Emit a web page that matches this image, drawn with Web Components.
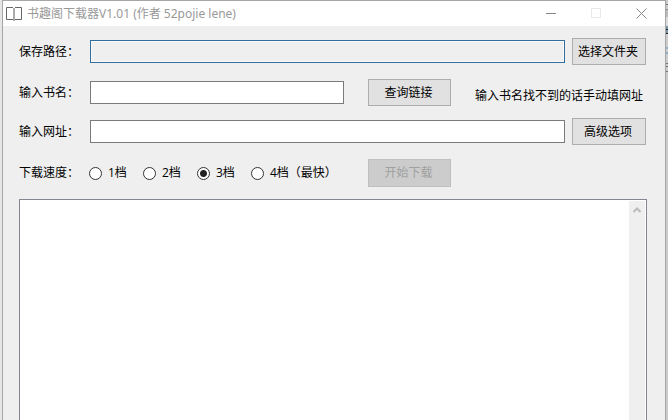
<!DOCTYPE html>
<html lang="zh-CN">
<head>
<meta charset="utf-8">
<title>书趣阁下载器V1.01</title>
<style>
  html, body { height: 100%; margin: 0; }
  body {
    overflow: hidden;
    font: 12px/16px "Open Sans", "Noto Sans CJK SC", sans-serif;
    color: #000;
    /* desktop showing past the window's edges */
    background:
      linear-gradient(#ccc 4px, #777 4px 5px, #ccc 5px 9px, #998f80 9px 10px, #bbb 10px 17px, #ddd 17px 26px, #7894a8 26px 29px, #222 29px 30px, #7894a8 30px 33px, #222 33px 34px, #ccc 34px 47px, #8fb0c8 47px 49px, #ccc 49px 52px, #8fb0c8 52px 54px, #ccc 54px 63px, #777 63px 64px, #ccc 64px 66px, #777 66px 67px, #ccc 67px 71px, #777 71px 72px, #cbcbcb 72px) right / 2px 100% no-repeat,
      #e6e6e6;
  }
</style>
</head>
<body>

<app-window caption="书趣阁下载器V1.01 (作者 52pojie lene)">
  <download-form></download-form>
</app-window>

<script>
(function(customElements){
  'use strict';

  class AppWindow extends HTMLElement{
    constructor(){
      super();
      this.attachShadow({mode: 'open'}).innerHTML = `<style>
        :host{
          display: flex;
          flex-direction: column;
          box-sizing: border-box;
          height: 100%;
          margin: 0 2px;
          border: 1px solid #a6a6a6;
          border-bottom: 0;
          background: #efefef;
        }
        header{
          display: flex;
          align-items: center;
          height: 25px;
          flex: none;
          padding: 0 1px 0 3px;
          background: #fff;
          color: #999;
        }
        .logo{ margin-right: 5px; }
        svg{ display: block; fill: none; }
        h1{ flex: 1; margin: 0; font: inherit; font-family: "Noto Sans", "Noto Sans CJK SC", sans-serif; }
        button{
          display: flex;
          align-items: center;
          justify-content: center;
          width: 45px;
          height: 25px;
          padding: 0;
          border: 0;
          background: none;
        }
      </style>
      <header>
        <svg class="logo" width="16" height="16" stroke="#666">
          <path d="M7 1.500H.5v12H7M9 1.500h6.500v12H9"/>
          <path d="M8 2v13" stroke="#aaa" stroke-width="2"/>
        </svg>
        <h1></h1>
        <button type="button" aria-label="最小化"><svg width="11" height="11" stroke="#888"><path d="M0 5.500h10"/></svg></button>
        <button type="button" aria-label="最大化" disabled><svg width="11" height="11" stroke="#e8e8e8"><path d="M.5.5h9v9h-9z"/></svg></button>
        <button type="button" aria-label="关闭"><svg width="11" height="11" stroke="#888"><path d="M.5.5l10 10M10.500.5l-10 10"/></svg></button>
      </header>
      <slot></slot>`;
      this.shadowRoot.querySelector('h1').textContent = this.getAttribute('caption');
    }
  }

  class PushButton extends HTMLElement{
    constructor(){
      super();
      this.attachShadow({mode: 'open'}).innerHTML = `<style>
        :host{ display: flex; flex: none; width: 74px; height: 27px; }
        :host([wide]){ width: 83px; }
        :host([disabled]){ height: 28px; }
        button{
          flex: 1;
          padding: 0 2px 0 0;
          border: 1px solid #adadad;
          background: #e1e1e1;
          font: inherit;
          color: #000;
          white-space: nowrap;
        }
        button:disabled{ border-color: #bfbfbf; background: #ccc; color: #a0a0a0; }
      </style>
      <button type="button"><slot></slot></button>`;
      this.shadowRoot.querySelector('button').disabled = this.hasAttribute('disabled');
    }
  }

  class TextField extends HTMLElement{
    constructor(){
      super();
      this.attachShadow({mode: 'open'}).innerHTML = `<style>
        :host{ display: flex; flex: 1; align-items: center; min-width: 0; }
        label{ flex: none; width: 71px; white-space: nowrap; }
        input{
          flex: 1;
          min-width: 0;
          height: 23px;
          box-sizing: border-box;
          padding: 0 3px;
          border: 1px solid #7a7a7a;
          border-radius: 0;
          outline: 0;
          background: #fff;
          font: inherit;
        }
        input:read-only{
          border-color: #336f9e;
          background: #efefef;
          box-shadow: inset 0 0 0 1px #fafafa;
        }
      </style>
      <label for="field"></label>
      <input id="field" type="text">`;
      this.shadowRoot.querySelector('label').textContent = this.getAttribute('label');
      this.shadowRoot.querySelector('input').readOnly = this.hasAttribute('readonly');
    }
  }

  class SpeedPicker extends HTMLElement{
    constructor(){
      super();
      const speeds = ['1档', '2档', '3档', '4档（最快）'];
      const options = speeds.map((speed, i) => `
        <label><input type="radio" name="speed" value="${i + 1}"${i === 2 ? ' checked' : ''}>${speed}</label>`).join('');

      this.attachShadow({mode: 'open'}).innerHTML = `<style>
        :host{ display: block; flex: 1; min-width: 0; }
        fieldset{ display: flex; align-items: center; min-width: 0; margin: 0; padding: 0; border: 0; }
        .title{ flex: none; width: 70px; white-space: nowrap; }
        label{ display: flex; align-items: center; flex: none; width: 54px; white-space: nowrap; }
        input{
          appearance: none;
          flex: none;
          width: 13px;
          height: 13px;
          margin: 0 6px 0 0;
          border: 1px solid #333;
          border-radius: 50%;
          background: #fff;
        }
        input:checked{ background: radial-gradient(circle, #222 3px, #fff 4px); }
      </style>
      <fieldset aria-labelledby="title">
        <span class="title" id="title">下载速度：</span>${options}
      </fieldset>`;
    }
  }

  class LogBox extends HTMLElement{
    constructor(){
      super();
      this.attachShadow({mode: 'open'}).innerHTML = `<style>
        :host{
          display: flex;
          flex: 1;
          border: 1px solid #82868f;
          border-bottom: 0;
          background: #fff;
        }
        textarea{ flex: 1; padding: 2px; border: 0; outline: 0; resize: none; font: inherit; }
        .bar{ width: 16px; margin: 1px 1px 0 0; background: #efefef; }
        button{ display: block; width: 16px; padding: 6px 4px; border: 0; background: none; }
        svg{ display: block; }
      </style>
      <textarea aria-label="下载日志" readonly></textarea>
      <div class="bar">
        <button type="button" aria-label="向上滚动"><svg width="8" height="6" fill="none" stroke="#bbb" stroke-width="2"><path d="M.5 5L4 1.500L7.500 5"/></svg></button>
      </div>`;
    }
  }

  class DownloadForm extends HTMLElement{
    constructor(){
      super();
      this.attachShadow({mode: 'open'}).innerHTML = `<style>
        :host{
          display: flex;
          flex: 1;
          flex-direction: column;
          padding: 12px 18px 0 16px;
        }
        .row{ display: flex; align-items: center; gap: 7px; margin: 0 1px 14px 0; }
        .row.split{ gap: 24px; margin-bottom: 12px; }
        .note{ flex: none; width: 171px; padding-top: 6px; white-space: nowrap; }
      </style>
      <div class="row">
        <text-field label="保存路径：" readonly></text-field>
        <push-button>选择文件夹</push-button>
      </div>
      <div class="row split">
        <text-field label="输入书名："></text-field>
        <push-button wide>查询链接</push-button>
        <span class="note">输入书名找不到的话手动填网址</span>
      </div>
      <div class="row">
        <text-field label="输入网址："></text-field>
        <push-button>高级选项</push-button>
      </div>
      <div class="row split">
        <speed-picker></speed-picker>
        <push-button wide disabled>开始下载</push-button>
        <span class="note"></span>
      </div>
      <log-box></log-box>`;
    }
  }

  customElements.define('push-button', PushButton);
  customElements.define('text-field', TextField);
  customElements.define('speed-picker', SpeedPicker);
  customElements.define('log-box', LogBox);
  customElements.define('download-form', DownloadForm);
  customElements.define('app-window', AppWindow);
})(window.customElements);
</script>
</body>
</html>
